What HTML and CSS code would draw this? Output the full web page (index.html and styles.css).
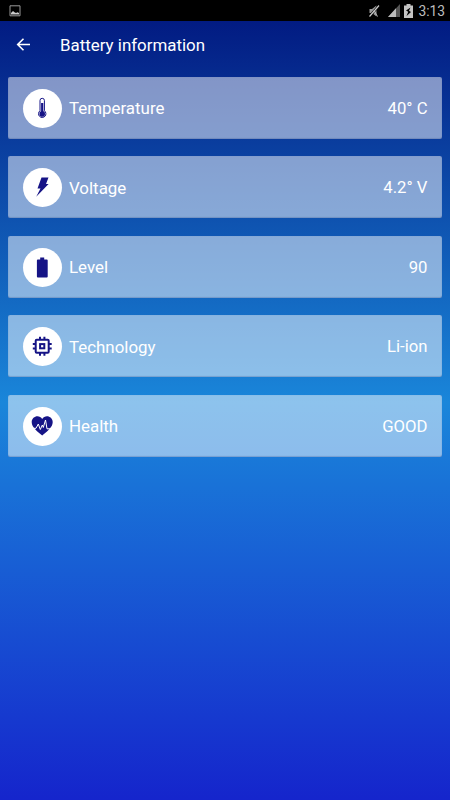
FILE: index.html
```html
<!DOCTYPE html>
<html lang="en">
<head>
<meta charset="utf-8">
<title>Battery information</title>
<link rel="stylesheet" href="styles.css">
</head>
<body>
<div class="status">
  <svg class="shot" width="12" height="12" viewBox="0 0 12 12"><path d="M1 .8h10v10H1z" fill="none" stroke="#999"/><path d="M2 9.500V8l2-2 1.500 1.200L7 8l1.500-.7L10 8v1.500z" fill="#ccc"/></svg>
  <div class="status-right">
    <svg class="mute" width="12" height="14" viewBox="0 0 12 14"><path d="M1.500 5h2.500L8.500 1.500v11L4 9H1.500z" fill="#999"/><path d="M11 1.500 1.500 12.500" stroke="#000" stroke-width="2.600"/><path d="M11 1.500 1.500 12.500" stroke="#ccc" stroke-width="1.200"/><path d="m6 6.500 3.500 6" stroke="#bbb"/></svg>
    <svg class="signal" width="12" height="13" viewBox="0 0 12 13"><path d="M12 0v13H0z" fill="#555"/><path d="M8 4.300V13H0z" fill="#bbb"/></svg>
    <svg class="batt" width="9" height="14" viewBox="0 0 9 14"><path d="M2.500 0h4v1.500H9V14H0V1.500h2.500z" fill="#c4c4c4"/><path d="M6.500 3.500 2 6.500l2.200 1.200L2.500 12 7 8 5 6.800z" fill="#000"/></svg>
    <span class="clock">3:13</span>
  </div>
</div>
<div class="screen">
  <header class="bar">
    <svg class="back" width="14" height="14" viewBox="0 0 14 14"><path d="M14 6.500H2M7.500.7 1.700 6.500l5.800 5.800" fill="none" stroke="#fff" stroke-width="1.600"/></svg>
    <h1>Battery information</h1>
  </header>
  <main class="list">
    <section class="card">
      <div class="disc"><svg width="38" height="38" viewBox="0 0 38 38"><path d="M17 21.800V11.500a2.200 2.200 0 0 1 4.400 0v10.300a3.700 3.700 0 1 1-4.400 0z" fill="#fff" stroke="#161486" stroke-width="1"/><path d="M19.200 14v11" stroke="#161486" stroke-width="2.200"/><circle cx="19.200" cy="24.900" r="2.800" fill="#161486"/></svg></div>
      <span class="name">Temperature</span><span class="value">40° C</span>
    </section>
    <section class="card">
      <div class="disc"><svg width="38" height="38" viewBox="0 0 38 38"><path d="M18.500 9.500h7L23 16h2.600L13.200 28.800l4.300-8.300h-3z" fill="#161486"/></svg></div>
      <span class="name">Voltage</span><span class="value">4.2° V</span>
    </section>
    <section class="card">
      <div class="disc"><svg width="38" height="38" viewBox="0 0 38 38"><path d="M17.200 9.500h4v2h2.600q.9 0 .9.900v16.100q0 .9-.9.900h-9q-.9 0-.9-.9V12.400q0-.9.900-.9h2.400z" fill="#161486"/></svg></div>
      <span class="name">Level</span><span class="value">90</span>
    </section>
    <section class="card">
      <div class="disc"><svg width="38" height="38" viewBox="0 0 38 38"><g fill="none" stroke="#161486" stroke-width="2"><rect x="12.700" y="12.700" width="13" height="13" rx="1"/><rect x="17.100" y="17.100" width="4.200" height="4.200"/><path d="M17 9.800v3M21.400 9.800v3M17 25.700v3M21.400 25.700v3M9.800 17h3M9.800 21.400h3M25.700 17h3M25.700 21.400h3"/></g></svg></div>
      <span class="name">Technology</span><span class="value">Li-ion</span>
    </section>
    <section class="card">
      <div class="disc"><svg width="38" height="38" viewBox="0 0 38 38"><path d="M19.200 28.500C14.500 24.500 8.700 20.200 8.700 15.200c0-6.200 7.700-8 10.500-3.200 2.800-4.800 10.500-3 10.500 3.200 0 5-5.800 9.300-10.500 13.300z" fill="#161486"/><path d="M10.500 21.300h2.500l2.300-4.300 2 5.500 2-4.500 1 2.500 2.200-7.500 1.500 8.800h4.500" fill="none" stroke="#fff" stroke-width="1"/></svg></div>
      <span class="name">Health</span><span class="value">GOOD</span>
    </section>
  </main>
</div>
</body>
</html>
```
FILE: styles.css
```css
* { box-sizing: border-box; }
body {
  margin: 0;
  width: 450px;
  height: 800px;
  display: flex;
  flex-direction: column;
  overflow: hidden;
  font-family: Roboto, "Noto Sans", sans-serif;
  color: #fff;
}
.status {
  height: 21px;
  background: #000;
  display: flex;
  align-items: center;
  justify-content: space-between;
  padding: 0 5px 0 9px;
}
.status-right { display: flex; align-items: center; height: 21px; }
.mute { margin-right: 8px; }
.signal { margin-right: 4px; }
.batt { margin-right: 5px; }
.clock { font-size: 13.800px; line-height: 21px; padding-top: 1px; color: #bdbdbd; }
.screen {
  flex: 1;
  background: linear-gradient(#021b82, #1a86da 49%, #1525cc);
}
.bar { height: 47px; display: flex; align-items: center; padding-left: 16px; }
.back { margin-right: 30px; }
h1 { margin: 0; font-size: 16.900px; font-weight: 400; line-height: 24px; }
.list { display: grid; gap: 17.500px; padding: 8.600px 8px 0; }
.card {
  height: 62px;
  display: flex;
  align-items: center;
  padding: 1px 14.500px 0 15px;
  border-radius: 2px;
  background: rgba(255, 255, 255, 0.5);
  box-shadow: inset 0 -1px 1px rgba(60, 80, 140, 0.25), inset 0 0 1px rgba(60, 80, 140, 0.3);
  font-size: 16.900px;
  line-height: 20px;
}
.disc {
  width: 39px;
  height: 39px;
  border-radius: 50%;
  background: #fff;
  margin-right: 7px;
}
.disc svg { display: block; }
.name { flex: 1; }
.value { font-size: 16.700px; padding-top: 1px; }
```
